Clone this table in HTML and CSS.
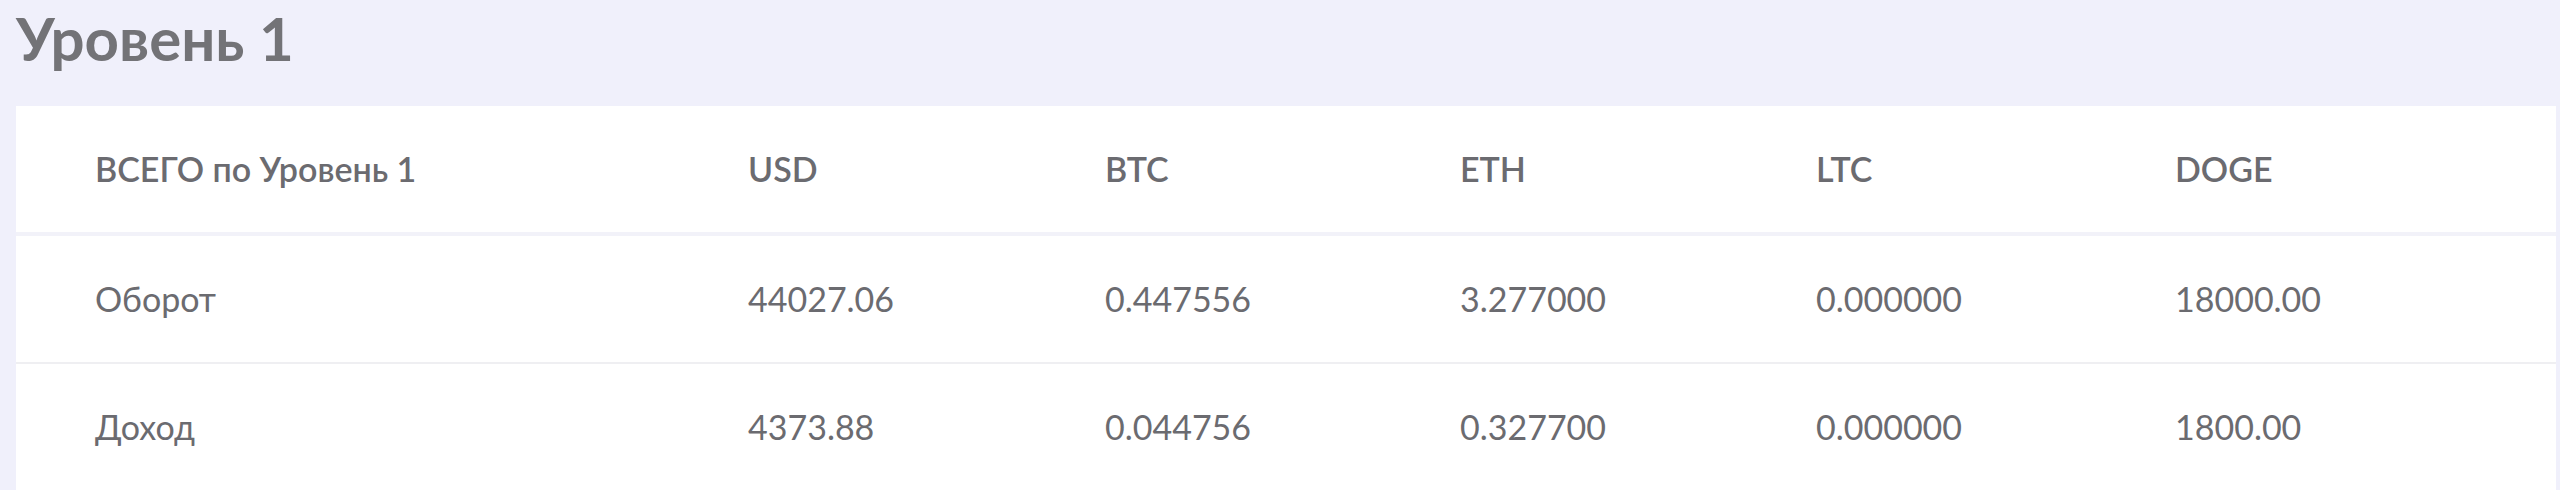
FILE: index.html
```html
<!DOCTYPE html>
<html lang="ru">

<head>
    <meta charset="UTF-8">
    <meta name="viewport" content="width=device-width, initial-scale=1.0">
    <title>Уровень 1</title>
    <link rel="stylesheet" href="styles.css">
</head>

<body>
    <div class="level">
        <h2 class="level-title">Уровень 1</h2>
        <div class="card">
            <div class="row head">
                <div class="cell">ВСЕГО по Уровень 1</div>
                <div class="cell">USD</div>
                <div class="cell">BTC</div>
                <div class="cell">ETH</div>
                <div class="cell">LTC</div>
                <div class="cell">DOGE</div>
            </div>
            <div class="row">
                <div class="cell">Оборот</div>
                <div class="cell">44027.06</div>
                <div class="cell">0.447556</div>
                <div class="cell">3.277000</div>
                <div class="cell">0.000000</div>
                <div class="cell">18000.00</div>
            </div>
            <div class="row">
                <div class="cell">Доход</div>
                <div class="cell">4373.88</div>
                <div class="cell">0.044756</div>
                <div class="cell">0.327700</div>
                <div class="cell">0.000000</div>
                <div class="cell">1800.00</div>
            </div>
        </div>
    </div>
</body>

</html>
```

FILE: styles.css
```css
* {
    margin: 0;
    padding: 0;
    box-sizing: border-box;
}

body {
    background: #f0f0fb;
    font-family: Lato, "Open Sans", sans-serif;
    color: #6b6b70;
}

.level {
    padding: 2px 4px 0 16px;
}

.level-title {
    font-size: 60px;
    line-height: 72px;
    font-weight: 700;
    color: #737377;
    margin-bottom: 32px;
}

.card {
    background: #fff;
}

.row {
    display: grid;
    grid-template-columns: 653px 357px 355px 356px 359px 1fr;
    padding-left: 79px;
    border-bottom: 2px solid #efeff2;
}

.row.head {
    border-bottom: 4px solid #f2f2f9;
    font-weight: 600;
}

.cell {
    font-size: 34px;
    line-height: 54px;
    padding: 36px 0;
    white-space: nowrap;
}
```
